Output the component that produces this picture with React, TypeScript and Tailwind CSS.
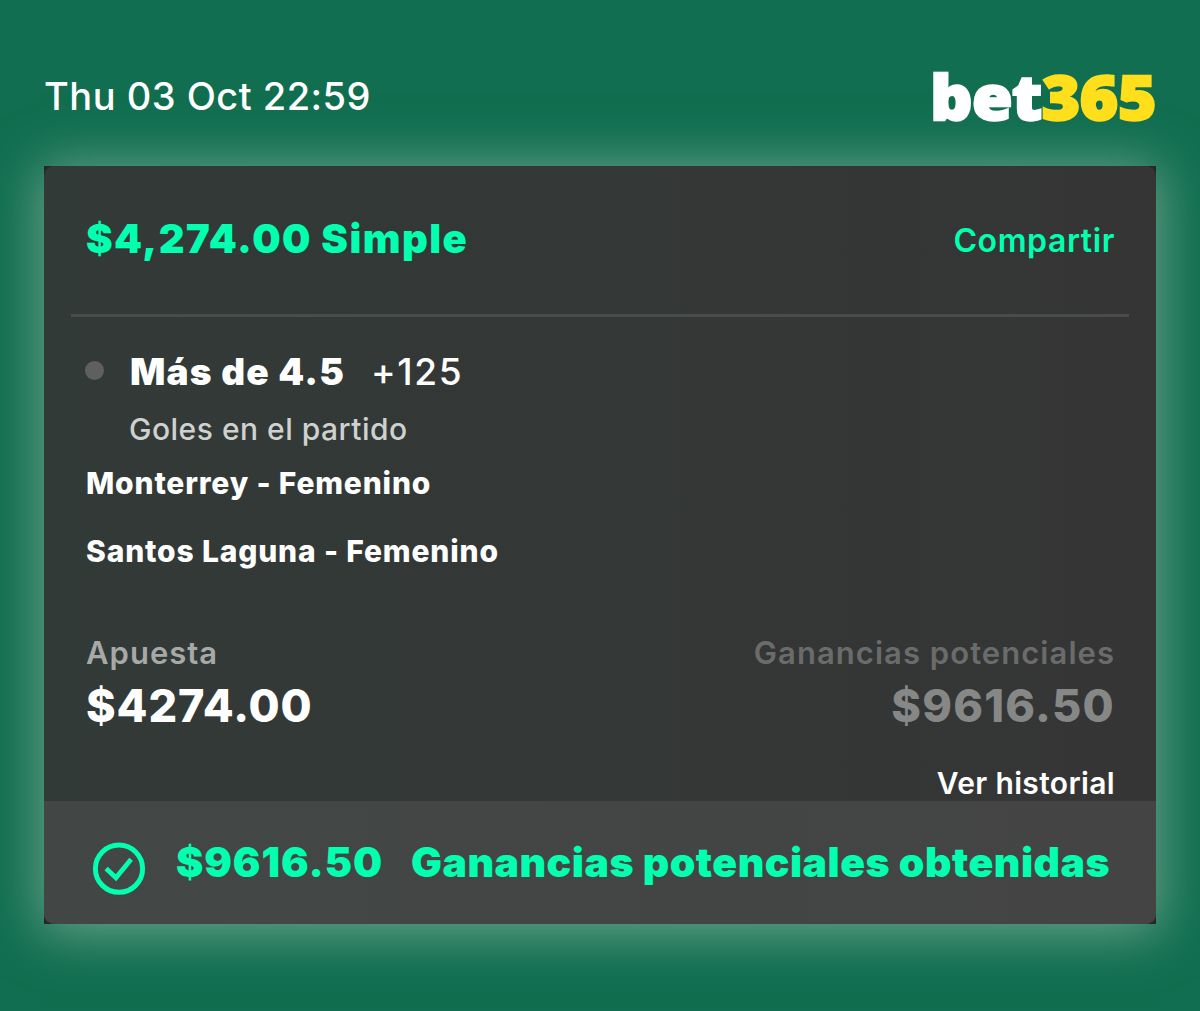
function Logo() {
  return (
    <div className="flex mt-[63px] h-[66px] origin-right scale-x-[1.06] font-['Noto_Sans',sans-serif] font-black text-[62px] leading-[66px] whitespace-nowrap">
      <span className="tracking-[-0.5px] text-white [-webkit-text-stroke:2.4px_#ffffff]">bet</span>
      <span className="tracking-[-0.4px] text-[#ffdf1b] [-webkit-text-stroke:2.4px_#ffdf1b]">365</span>
    </div>
  )
}

function WonIcon() {
  return (
    <svg width="54" height="54" viewBox="0 0 54 54" fill="none" stroke="#03ffb0" className="shrink-0">
      <circle cx="27" cy="27.7" r="23.6" strokeWidth="5" />
      <path d="M14.1 27.6 L24 36.8 L39.1 18.2" strokeWidth="4.8" />
    </svg>
  )
}

function BetHeader() {
  return (
    <div className="flex justify-between h-[148px] pt-[53px] pl-[42px] pr-[41px] text-[#03ffb0]">
      <h1 className="text-[40px] leading-none font-black tracking-[1.45px]">$4,274.00 Simple</h1>
      <button type="button" className="mt-[6px] h-8 text-[32px] leading-none font-semibold tracking-[0.6px]">
        Compartir
      </button>
    </div>
  )
}

function Selection() {
  return (
    <div className="pt-[36px] pl-[42px]">
      <div className="flex h-[37px] text-[37px] leading-none text-white">
        <span className="mt-[8px] ml-[-1px] size-[19px] rounded-full bg-[#5f5f5f]" />
        <span className="ml-[26px] w-[214px] font-black tracking-[1.15px] whitespace-nowrap">Más de 4.5</span>
        <span className="ml-[27px] font-medium tracking-[1.6px]">+125</span>
      </div>
      <p className="mt-[24px] ml-[43px] text-[30px] leading-none font-medium tracking-[0.5px] text-[#cfd1d0]">
        Goles en el partido
      </p>
      <p className="mt-[24px] text-[30px] leading-none font-extrabold tracking-[0.82px] text-white">Monterrey - Femenino</p>
      <p className="mt-[38px] text-[30px] leading-none font-extrabold tracking-[0.84px] text-white">
        Santos Laguna - Femenino
      </p>
    </div>
  )
}

function Stakes() {
  return (
    <div className="flex justify-between pt-[71px] pl-[42px] pr-[41px] leading-none">
      <div>
        <p className="text-[31px] leading-none font-semibold tracking-[1px] text-[#a6a9a8]">Apuesta</p>
        <p className="mt-[15px] text-[45px] leading-none font-extrabold tracking-[0.9px] text-white">$4274.00</p>
      </div>
      <div className="text-right">
        <p className="text-[31px] leading-none font-semibold tracking-[1.05px] text-[#6a6b6b]">Ganancias potenciales</p>
        <p className="mt-[15px] text-[45px] leading-none font-extrabold tracking-[1.25px] text-[#868787]">$9616.50</p>
      </div>
    </div>
  )
}

export default function App() {
  return (
    <div className="w-[1200px] h-[1011px] overflow-hidden bg-[#116e50] font-[Inter,sans-serif]">
      <header className="flex justify-between h-[166px] px-[44px]">
        <time className="mt-[77px] h-[38px] text-[38px] leading-none font-medium tracking-[0.5px] text-white">
          Thu 03 Oct 22:59
        </time>
        <Logo />
      </header>
      <main className="mx-[44px] h-[758px] bg-[#242827] shadow-[0_4px_50px_4px_rgba(150,190,170,0.68)]">
        <div className="flex flex-col h-[758px] overflow-hidden rounded-[10px] bg-linear-to-r from-[#323a37] to-[#353535]">
          <BetHeader />
          <hr className="mx-[27px] h-[3px] border-0 bg-[#484c4b]" />
          <Selection />
          <Stakes />
          <div className="flex justify-end pt-[40px] pr-[41px]">
            <button type="button" className="h-[30px] text-[30px] leading-none font-semibold tracking-[0.35px] text-white">
              Ver historial
            </button>
          </div>
          <footer className="flex mt-auto h-[123px] pl-[48px] pt-[40px] bg-linear-to-r from-[#424745] to-[#444444] text-[#03ffb0]">
            <WonIcon />
            <p className="flex mt-[1px] ml-[30px] text-[41px] leading-none font-black whitespace-nowrap">
              <span className="w-[206px] tracking-[0.95px]">$9616.50</span>
              <span className="ml-[29px] tracking-[0.5px]">Ganancias potenciales obtenidas</span>
            </p>
          </footer>
        </div>
      </main>
    </div>
  )
}
